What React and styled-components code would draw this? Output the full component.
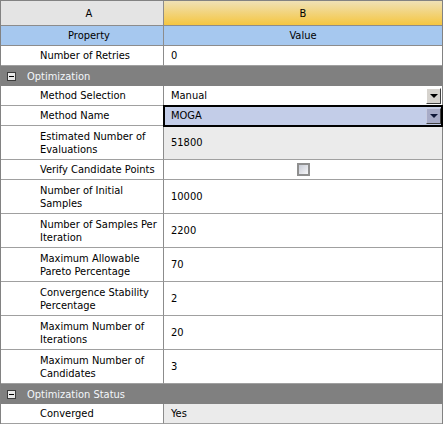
import React from 'react'
import styled, { createGlobalStyle, css } from 'styled-components'

const GlobalStyle = createGlobalStyle`
  body {
    margin: 0;
    background: #fff;
    font-family: "DejaVu Sans Condensed", "Liberation Sans", Arial, sans-serif;
    font-size: 11px;
    color: #000;
  }
`

const Grid = styled.div`
  width: 443px;
  display: grid;
  grid-template-columns: 163px 1fr;
  border: 1px solid #828282;
  border-bottom: none;
  box-sizing: border-box;
`

const HeaderCell = styled.div`
  height: 25px;
  box-sizing: border-box;
  display: flex;
  align-items: center;
  justify-content: center;
  border-bottom: 1px solid #8c8c8c;
  border-right: ${p => (p.$col === 'A' ? '1px solid #8c8c8c' : 'none')};
  padding-left: ${p => (p.$col === 'A' ? '14px' : '0')};
  background: ${p =>
    p.$col === 'A' ? '#e4e4e4' : 'linear-gradient(#efe1b6, #f5c640)'};
`

const TitleCell = styled.div`
  height: 20px;
  box-sizing: border-box;
  display: flex;
  align-items: center;
  justify-content: center;
  background: #a6c8ef;
  border-bottom: 1px solid #8c8c8c;
  border-right: ${p => (p.$first ? '1px solid #8c8c8c' : 'none')};
  padding-left: ${p => (p.$first ? '14px' : '0')};
`

const LabelCell = styled.div`
  height: ${p => (p.$tall ? '34px' : '20px')};
  box-sizing: border-box;
  display: flex;
  align-items: center;
  padding-left: 39px;
  line-height: 13px;
  white-space: pre-line;
  border-bottom: 1px solid #a0a0a0;
  border-right: 1px solid #8c8c8c;
`

const ValueCell = styled.div`
  height: ${p => (p.$tall ? '34px' : '20px')};
  box-sizing: border-box;
  display: flex;
  align-items: center;
  justify-content: ${p => (p.$center ? 'center' : 'space-between')};
  padding-left: ${p => (p.$center ? '0' : '7px')};
  border-bottom: 1px solid #a0a0a0;
  background: ${p => (p.$readonly ? '#ebebeb' : p.$selected ? '#c3cde8' : '#fff')};
  ${p =>
    p.$selected &&
    css`
      position: relative;
      z-index: 1;
      outline: 2px solid #000;
      outline-offset: -1px;
    `}
`

const GroupRow = styled.div`
  grid-column: 1 / -1;
  height: 20px;
  display: flex;
  align-items: center;
  gap: 11px;
  padding-left: 6px;
  background: #808080;
  color: #f4f7fb;
`

const ToggleBox = styled.span`
  width: 9px;
  height: 9px;
  box-sizing: border-box;
  border: 1px solid #3c3c3c;
  background: #e8e8e8;
  display: flex;
  align-items: center;
  justify-content: center;
  &::after {
    content: '';
    width: 5px;
    height: 1px;
    background: #000;
  }
`

const DropButton = styled.span`
  width: 15px;
  height: 16px;
  margin-right: 1px;
  box-sizing: border-box;
  display: flex;
  align-items: center;
  justify-content: center;
  background: ${p => (p.$active ? '#a7abc7' : '#d6d3ce')};
  border-top: 1px solid ${p => (p.$active ? '#c8cce0' : '#fff')};
  border-left: 1px solid ${p => (p.$active ? '#c8cce0' : '#fff')};
  border-right: 1px solid #404040;
  border-bottom: 1px solid #404040;
  &::after {
    content: '';
    border-left: 4px solid transparent;
    border-right: 4px solid transparent;
    border-top: 4px solid ${p => (p.$active ? '#101838' : '#000')};
    margin-top: 1px;
  }
`

const Checkbox = styled.span`
  width: 13px;
  height: 13px;
  box-sizing: border-box;
  border: 2px solid #8f8f8f;
  background: linear-gradient(135deg, #c8ccd6, #f6f6f8);
  margin-left: 1px;
`

const rows = [
  { type: 'prop', label: 'Number of Retries', value: '0' },
  { type: 'group', label: 'Optimization' },
  { type: 'prop', label: 'Method Selection', value: 'Manual', drop: true },
  { type: 'prop', label: 'Method Name', value: 'MOGA', drop: true, selected: true },
  { type: 'prop', label: 'Estimated Number of\nEvaluations', value: '51800', readonly: true },
  { type: 'prop', label: 'Verify Candidate Points', check: true },
  { type: 'prop', label: 'Number of Initial\nSamples', value: '10000' },
  { type: 'prop', label: 'Number of Samples Per\nIteration', value: '2200' },
  { type: 'prop', label: 'Maximum Allowable\nPareto Percentage', value: '70' },
  { type: 'prop', label: 'Convergence Stability\nPercentage', value: '2' },
  { type: 'prop', label: 'Maximum Number of\nIterations', value: '20' },
  { type: 'prop', label: 'Maximum Number of\nCandidates', value: '3' },
  { type: 'group', label: 'Optimization Status' },
  { type: 'prop', label: 'Converged', value: 'Yes', readonly: true },
]

const App = () => {
  return (
    <>
      <GlobalStyle />
      <Grid>
        <HeaderCell $col="A">A</HeaderCell>
        <HeaderCell $col="B">B</HeaderCell>
        <TitleCell $first>Property</TitleCell>
        <TitleCell>Value</TitleCell>
        {rows.map((r, i) => {
          if (r.type === 'group') {
            return (
              <GroupRow key={i}>
                <ToggleBox />
                {r.label}
              </GroupRow>
            )
          }
          const tall = r.label.includes('\n')
          return (
            <React.Fragment key={i}>
              <LabelCell $tall={tall}>{r.label}</LabelCell>
              <ValueCell
                $tall={tall}
                $readonly={r.readonly}
                $selected={r.selected}
                $center={r.check}
              >
                {r.check ? <Checkbox /> : <span>{r.value}</span>}
                {r.drop && <DropButton $active={r.selected} />}
              </ValueCell>
            </React.Fragment>
          )
        })}
      </Grid>
    </>
  )
}

export default App
